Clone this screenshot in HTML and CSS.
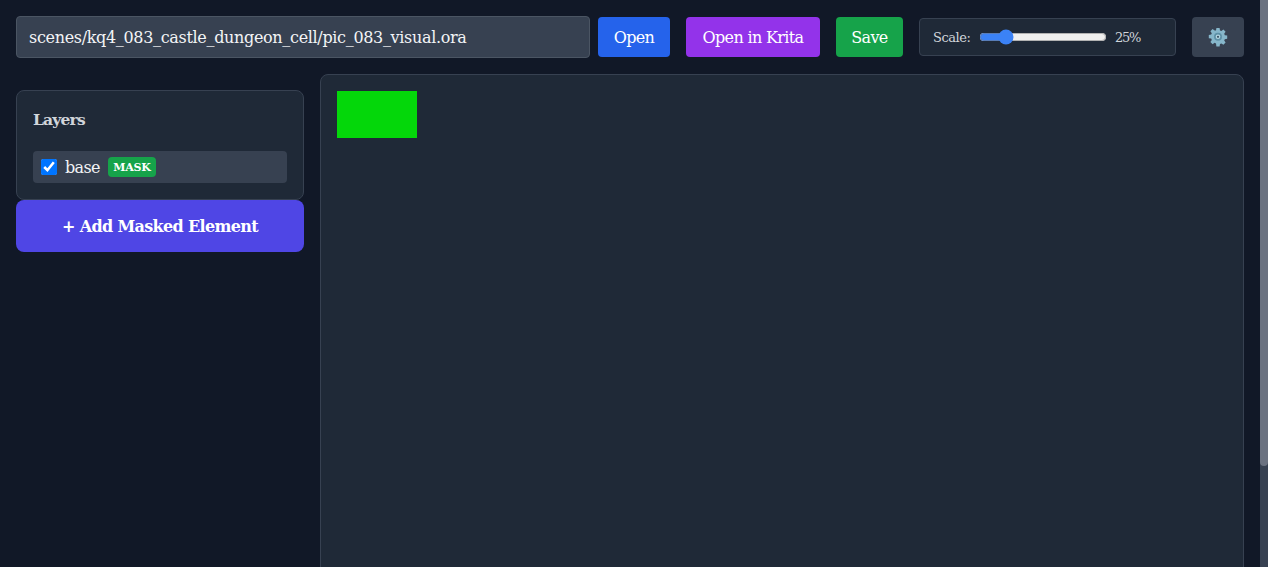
FILE: index.html
```html
<!DOCTYPE html>
<html lang="en">
<head>
<meta charset="utf-8">
<title>Layer Editor</title>
<link rel="stylesheet" href="styles.css">
</head>
<body>
<div class="shell">
<div class="app">
  <header class="toolbar">
    <div class="path-group">
      <input class="path-input" type="text" value="scenes/kq4_083_castle_dungeon_cell/pic_083_visual.ora">
      <button class="btn btn-blue">Open</button>
    </div>
    <button class="btn btn-purple">Open in Krita</button>
    <button class="btn btn-green">Save</button>
    <div class="scale-box">
      <label class="scale-label" for="scale">Scale:</label>
      <input class="scale-range" id="scale" type="range" min="10" max="100" value="25">
      <span class="scale-value">25%</span>
    </div>
    <button class="btn btn-gear" aria-label="Settings">
      <svg class="gear" viewBox="0 0 20 20" width="20" height="20" aria-hidden="true">
        <path fill="#86b6ca" d="M8.4 1h3.2l.4 2.4 1.4.6 2-1.4 2.2 2.2-1.4 2 .6 1.4 2.4.4v3.2l-2.4.4-.6 1.4 1.4 2-2.2 2.2-2-1.4-1.4.6-.4 2.4H8.4L8 16.4 6.6 15.8l-2 1.4-2.2-2.2 1.4-2-.6-1.4L.8 11.2V8l2.4-.4.6-1.4-1.4-2 2.2-2.2 2 1.4L8 3.4z"/>
        <circle cx="10" cy="9.8" r="4" fill="#5d90a6"/>
        <circle cx="10" cy="9.8" r="2.3" fill="#b4d6e2"/>
        <circle cx="10" cy="9.8" r="1.1" fill="#3d5566"/>
      </svg>
    </button>
  </header>
  <main class="workspace">
    <aside class="sidebar">
      <section class="panel">
        <h2 class="panel-title">Layers</h2>
        <div class="layer-row">
          <input class="layer-check" type="checkbox" checked>
          <span class="layer-name">base</span>
          <span class="badge">MASK</span>
        </div>
      </section>
      <button class="add-btn">+ Add Masked Element</button>
    </aside>
    <section class="canvas-panel">
      <div class="mask-preview"></div>
    </section>
  </main>
</div>
<div class="scrollbar"><div class="scrollbar-thumb"></div></div>
</div>
</body>
</html>
```

FILE: styles.css
```css
* { box-sizing: border-box; }
html, body { height: 100%; }
body {
  margin: 0;
  background: #111827;
  color: #f3f4f6;
  font-family: "Roboto Slab", "DejaVu Serif", "Liberation Serif", serif;
}
.shell { display: flex; height: 100vh; overflow: hidden; }
.app { flex: 1; min-width: 0; padding: 16px; }
.scrollbar { flex: none; width: 8px; background: #374151; }
.scrollbar-thumb { height: 466px; background: #6b7280; border-radius: 0 0 4px 4px; }
.toolbar { display: flex; align-items: center; gap: 16px; height: 42px; }
.path-group { display: flex; align-items: center; gap: 8px; flex: 1; }
.path-input {
  flex: 1;
  min-width: 0;
  height: 42px;
  padding: 0 12px;
  background: #374151;
  border: 1px solid #4b5563;
  border-radius: 4px;
  color: #f3f4f6;
  font: inherit;
  font-size: 16px;
  letter-spacing: -0.33px;
}
.btn {
  flex: none;
  height: 40px;
  padding: 0;
  border: 0;
  border-radius: 4px;
  color: #fff;
  font: inherit;
  font-size: 16px;
  letter-spacing: -0.65px;
}
.btn-blue { width: 72px; background: #2563eb; }
.btn-purple { width: 134px; background: #9333ea; }
.btn-green { width: 67px; background: #16a34a; }
.btn-gear {
  width: 52px;
  background: #374151;
  display: flex;
  align-items: center;
  justify-content: center;
}
.scale-box {
  flex: none;
  display: flex;
  align-items: center;
  gap: 8px;
  width: 257px;
  height: 38px;
  padding: 0 13px;
  background: #1f2937;
  border: 1px solid #374151;
  border-radius: 4px;
  font-size: 13px;
  letter-spacing: -0.45px;
  color: #d1d5db;
}
.scale-label { flex: none; width: 38px; white-space: nowrap; }
.scale-range { width: 128px; margin: 0; accent-color: #3b82f6; }
.scale-value { letter-spacing: -1.3px; }
.workspace { display: flex; gap: 16px; margin-top: 16px; align-items: flex-start; }
.sidebar { width: 288px; flex: none; margin-top: 16px; }
.panel {
  height: 110px;
  padding: 16px;
  background: #1f2937;
  border: 1px solid #374151;
  border-radius: 8px;
}
.panel-title {
  margin: 1px 0 19px;
  font-size: 15.5px;
  line-height: 24px;
  font-weight: 700;
  letter-spacing: -0.8px;
  color: #d1d5db;
}
.layer-row {
  display: flex;
  align-items: center;
  gap: 8px;
  height: 32px;
  padding: 0 8px;
  background: #374151;
  border-radius: 4px;
}
.layer-check { width: 16px; height: 16px; margin: 0; accent-color: #0075ff; }
.layer-name { font-size: 16px; letter-spacing: -0.65px; }
.badge {
  width: 48px;
  height: 20px;
  text-align: center;
  background: #16a34a;
  border-radius: 4px;
  color: #fff;
  font-size: 11px;
  line-height: 21px;
  font-weight: 700;
  letter-spacing: -0.2px;
}
.add-btn {
  display: block;
  width: 100%;
  height: 52px;
  padding: 1px 0 0;
  border: 0;
  border-radius: 8px;
  background: #4f46e5;
  color: #fff;
  font: inherit;
  font-size: 16px;
  font-weight: 700;
  letter-spacing: -0.65px;
}
.canvas-panel {
  flex: 1;
  height: 601px;
  padding: 16px;
  background: #1f2937;
  border: 1px solid #374151;
  border-radius: 8px;
}
.mask-preview { width: 80px; height: 47px; background: #04d70a; }
```
